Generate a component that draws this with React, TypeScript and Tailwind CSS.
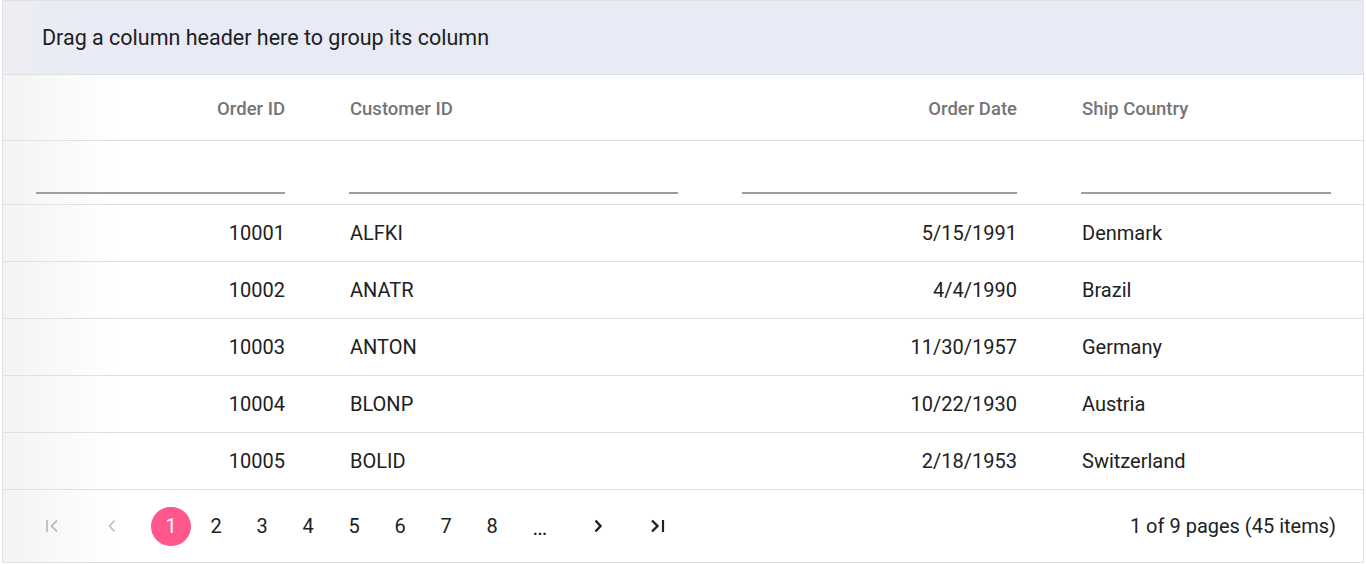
import React from 'react';

type Row = { id: number; customer: string; date: string; country: string };

const rows: Row[] = [
  { id: 10001, customer: 'ALFKI', date: '5/15/1991', country: 'Denmark' },
  { id: 10002, customer: 'ANATR', date: '4/4/1990', country: 'Brazil' },
  { id: 10003, customer: 'ANTON', date: '11/30/1957', country: 'Germany' },
  { id: 10004, customer: 'BLONP', date: '10/22/1930', country: 'Austria' },
  { id: 10005, customer: 'BOLID', date: '2/18/1953', country: 'Switzerland' },
];

// column widths (order id, customer id, order date, ship country)
const cols = 'grid grid-cols-[314px_393px_339px_1fr]';

const FirstIcon = ({ className }: { className?: string }) => (
  <svg width="16" height="14" viewBox="0 0 16 14" className={className}>
    <path d="M2 1v12" stroke="currentColor" strokeWidth="1.8" fill="none" />
    <path d="M12 1.5L6.5 7l5.5 5.5" stroke="currentColor" strokeWidth="1.8" fill="none" />
  </svg>
);

const PrevIcon = ({ className }: { className?: string }) => (
  <svg width="10" height="14" viewBox="0 0 10 14" className={className}>
    <path d="M7.5 1.5L2.5 7l5 5.5" stroke="currentColor" strokeWidth="1.6" fill="none" />
  </svg>
);

const NextIcon = ({ className }: { className?: string }) => (
  <svg width="10" height="14" viewBox="0 0 10 14" className={className}>
    <path d="M2.5 1.5L7.5 7l-5 5.5" stroke="currentColor" strokeWidth="2.4" fill="none" />
  </svg>
);

const LastIcon = ({ className }: { className?: string }) => (
  <svg width="16" height="14" viewBox="0 0 16 14" className={className}>
    <path d="M2 1.5L7.5 7 2 12.5" stroke="currentColor" strokeWidth="2.4" fill="none" />
    <path d="M13 1v12" stroke="currentColor" strokeWidth="2.2" fill="none" />
  </svg>
);

export default function App() {
  return (
    <div className="w-[1366px] h-[564px] bg-white font-['Roboto',sans-serif]">
      <div className="ml-[2px] w-[1362px] h-[563px] border border-[#e0e0e0] flex flex-col">
        {/* group drop area */}
        <div className="h-[74px] shrink-0 bg-[linear-gradient(to_right,#eceef3,#e8eaf6_110px)] border-b border-[#e0e0e0] flex items-center pl-[39px] pt-[2px] text-[21.5px] text-[#212121]">
          Drag a column header here to group its column
        </div>

        <div className="flex-1 flex flex-col bg-[linear-gradient(to_right,#f3f3f3,#ffffff_110px)]">
          {/* header */}
          <div className={`${cols} h-[66px] shrink-0 border-b border-[#e0e0e0] text-[18.5px] font-medium text-[#757575]`}>
            <div className="flex items-center justify-end pr-[32px] pt-[5px]">Order ID</div>
            <div className="flex items-center pl-[33px] pt-[5px]">Customer ID</div>
            <div className="flex items-center justify-end pr-[32px] pt-[5px]">Order Date</div>
            <div className="flex items-center pl-[33px] pt-[5px]">Ship Country</div>
          </div>

          {/* filter row */}
          <div className={`${cols} h-[64px] shrink-0 border-b border-[#e0e0e0]`}>
            <div className="flex items-end pb-[10px] pl-[33px] pr-[32px]">
              <div className="w-full h-[2px] bg-[#9e9e9e]" />
            </div>
            <div className="flex items-end pb-[10px] pl-[32px] pr-[32px]">
              <div className="w-full h-[2px] bg-[#9e9e9e]" />
            </div>
            <div className="flex items-end pb-[10px] pl-[32px] pr-[32px]">
              <div className="w-full h-[2px] bg-[#9e9e9e]" />
            </div>
            <div className="flex items-end pb-[10px] pl-[32px] pr-[32px]">
              <div className="w-full h-[2px] bg-[#9e9e9e]" />
            </div>
          </div>

          {/* rows */}
          {rows.map((r) => (
            <div
              key={r.id}
              className={`${cols} h-[57px] shrink-0 border-b border-[#e0e0e0] text-[20px] text-[#212121]`}
            >
              <div className="flex items-center justify-end pr-[32px]">{r.id}</div>
              <div className="flex items-center pl-[33px]">{r.customer}</div>
              <div className="flex items-center justify-end pr-[32px]">{r.date}</div>
              <div className="flex items-center pl-[33px]">{r.country}</div>
            </div>
          ))}

          {/* pager */}
          <div className="flex-1 flex items-center pl-[37px] pr-[27px] text-[20px]">
            <div className="flex items-center text-[#212121]">
              <span className="w-[26px] flex justify-center text-[#bdbdbd]">
                <FirstIcon />
              </span>
              <span className="w-[20px] ml-[36px] flex justify-center text-[#bdbdbd]">
                <PrevIcon />
              </span>
              <span className="ml-[29px] mr-[2px] w-[40px] h-[39px] rounded-full bg-[#ff568b] text-white flex items-center justify-center">
                1
              </span>
              {[2, 3, 4, 5, 6, 7, 8].map((n) => (
                <span key={n} className="w-[46px] flex justify-center">
                  {n}
                </span>
              ))}
              <span className="w-[50px] flex justify-center font-bold text-[16px] leading-none pt-[8px]">...</span>
              <span className="ml-[23px] w-[20px] flex justify-center">
                <NextIcon />
              </span>
              <span className="ml-[40px] w-[20px] flex justify-center">
                <LastIcon />
              </span>
            </div>
            <div className="ml-auto text-[#212121]">1 of 9 pages (45 items)</div>
          </div>
        </div>
      </div>
    </div>
  );
}
